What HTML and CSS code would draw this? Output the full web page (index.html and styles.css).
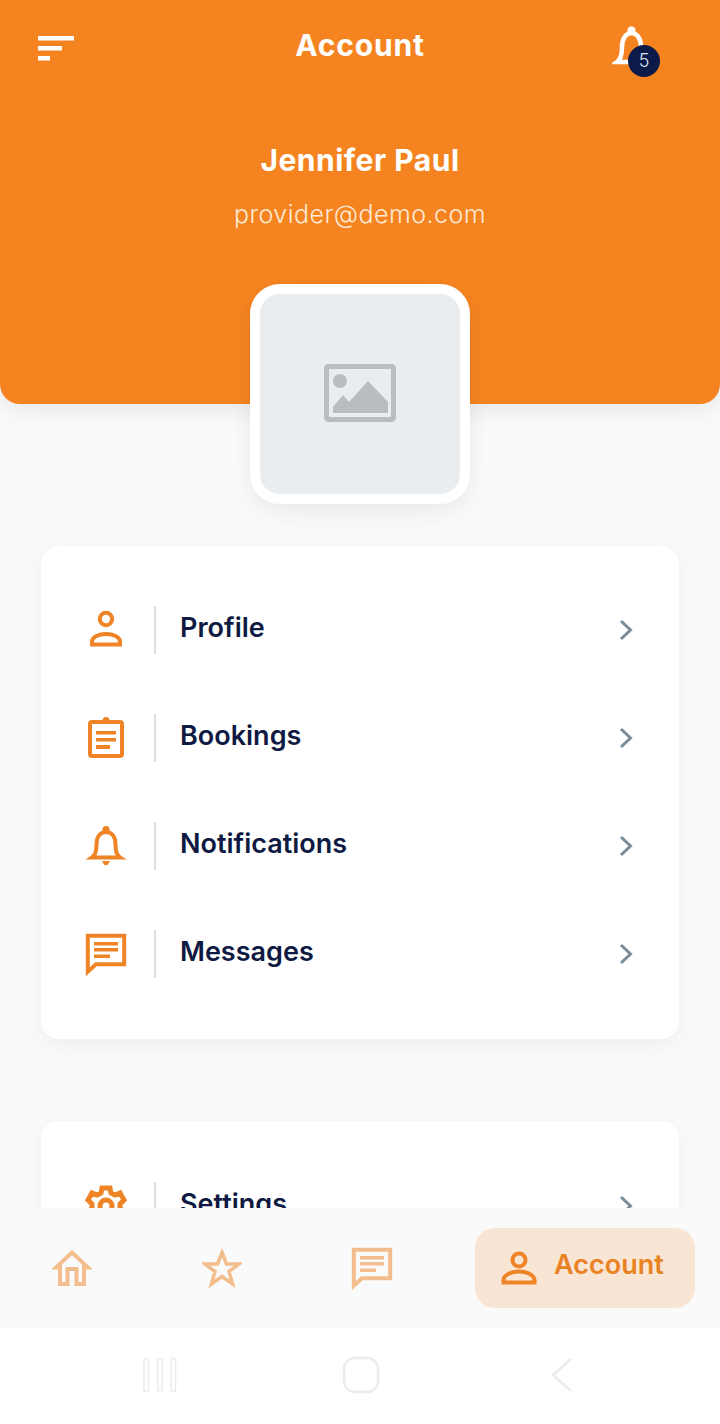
FILE: index.html
```html
<!DOCTYPE html>
<html lang="en">
<head>
<meta charset="utf-8">
<title>Account</title>
<link rel="stylesheet" href="styles.css">
</head>
<body>
<div class="screen">
  <main class="scroll">
    <header class="hero">
      <div class="topbar">
        <svg class="menu-icon" width="36" height="26" viewBox="0 0 36 26"><path class="white-fill" d="M0 0h36v4.500H0zM0 10h24v4.500H0zM0 20h12v4.500H0z"/></svg>
        <h1 class="title">Account</h1>
        <div class="bell-wrap">
          <svg width="40" height="44" viewBox="0 0 40 44"><path class="white-line" d="M5 38c3.500-2.500 5-6 5-15 0-9 4.500-14 9.500-14s9.500 5 9.500 14c0 9 1.500 12.500 5 15z"/><circle class="white-fill" cx="19.500" cy="6.500" r="4"/></svg>
          <span class="badge">5</span>
        </div>
      </div>
      <p class="name">Jennifer Paul</p>
      <p class="email">provider@demo.com</p>
    </header>

    <div class="avatar">
      <svg width="72" height="60" viewBox="0 0 72 60"><rect class="ph-line" x="2.500" y="2.500" width="67" height="53" rx="2"/><circle class="ph-fill" cx="16" cy="17" r="7"/><path class="ph-fill" d="M9 49v-6l10-12 6 7 19-21 20 21v11z"/></svg>
    </div>

    <section class="card card-first">
      <a class="row">
        <span class="row-icon"><svg width="44" height="44" viewBox="0 0 44 44"><circle class="o-line" cx="22" cy="11" r="6.200"/><path class="o-line" d="M8 36.500v-2.500c0-5.500 7-8 14-8s14 2.500 14 8v2.500z"/></svg></span>
        <span class="row-label">Profile</span>
        <svg class="chev" width="14" height="22" viewBox="0 0 14 22"><path d="M2 2l9.500 9L2 20"/></svg>
      </a>
      <a class="row">
        <span class="row-icon"><svg width="44" height="44" viewBox="0 0 44 44"><rect class="o-line" x="6" y="6" width="32" height="34" rx="2"/><circle class="o-fill" cx="22" cy="4.500" r="3.500"/><path class="o-fill" d="M12 15h20v3.500H12zM12 22h20v3.500H12zM12 29h14v4H12z"/></svg></span>
        <span class="row-label">Bookings</span>
        <svg class="chev" width="14" height="22" viewBox="0 0 14 22"><path d="M2 2l9.500 9L2 20"/></svg>
      </a>
      <a class="row">
        <span class="row-icon"><svg width="44" height="44" viewBox="0 0 44 44"><path class="o-line" d="M8 33.500c3-2 4.500-5 4.500-13 0-8 4-12.500 9.500-12.500s9.500 4.500 9.500 12.500c0 8 1.500 11 4.500 13z"/><circle class="o-fill" cx="22" cy="5.500" r="3.500"/><path class="o-fill" d="M18 37h8l-2 3.500c-1 1-3 1-4 0z"/></svg></span>
        <span class="row-label">Notifications</span>
        <svg class="chev" width="14" height="22" viewBox="0 0 14 22"><path d="M2 2l9.500 9L2 20"/></svg>
      </a>
      <a class="row">
        <span class="row-icon"><svg width="44" height="44" viewBox="0 0 44 44"><path class="o-line" d="M3.800 3.800h36.400v28.400H12l-8.200 7.500z"/><path class="o-fill" d="M10 10h24v3.500H10zM10 16h24v3.500H10zM10 22.500h16V26H10z"/></svg></span>
        <span class="row-label">Messages</span>
        <svg class="chev" width="14" height="22" viewBox="0 0 14 22"><path d="M2 2l9.500 9L2 20"/></svg>
      </a>
    </section>

    <section class="card card-second">
      <a class="row">
        <span class="row-icon"><svg width="44" height="44" viewBox="0 0 44 44"><path class="o-gear" d="M18 4h8l1 5 4 2 5-2 4 7-4 4v4l4 4-4 7-5-2-4 2-1 5h-8l-1-5-4-2-5 2-4-7 4-4v-4l-4-4 4-7 5 2 4-2z"/><circle class="o-gear" cx="22" cy="22" r="6"/></svg></span>
        <span class="row-label">Settings</span>
        <svg class="chev" width="14" height="22" viewBox="0 0 14 22"><path d="M2 2l9.500 9L2 20"/></svg>
      </a>
    </section>
  </main>

  <nav class="tabs">
    <a class="tab"><svg width="40" height="38" viewBox="0 0 40 38"><path class="f-line" d="M4 18.500L20 3.500l16 15h-4V35h-7.500V20h-9v15H8V18.500z"/></svg></a>
    <a class="tab"><svg width="40" height="40" viewBox="0 0 40 40"><path class="f-line f-thin" d="M20 4.500l4.500 11.500h12.500l-10 7.500 3.600 12.500L20 28.500l-10.600 7.500 3.600-12.500-10-7.500h12.500z"/></svg></a>
    <a class="tab"><svg width="44" height="44" viewBox="0 0 44 44"><path class="f-line" d="M3.800 3.800h36.400v28.400H12l-8.200 7.500z"/><path class="f-fill" d="M10 10h24v3.500H10zM10 16h24v3.500H10zM10 22.500h16V26H10z"/></svg></a>
    <a class="tab-active">
      <svg width="36" height="34" viewBox="0 0 36 34"><circle class="o-line" cx="18" cy="9" r="6.500"/><path class="o-line" d="M2.500 31.500v-2c0-6 8.500-9 15.500-9s15.500 3 15.500 9v2z"/></svg>
      <span class="tab-label">Account</span>
    </a>
  </nav>

  <footer class="sysbar">
    <svg width="34" height="36" viewBox="0 0 34 36"><rect class="sys" x="1" y="1.500" width="4.500" height="33" rx="1"/><rect class="sys" x="14.700" y="1.500" width="4.500" height="33" rx="1"/><rect class="sys" x="28" y="1.500" width="4.500" height="33" rx="1"/></svg>
    <svg width="38" height="38" viewBox="0 0 38 38"><rect class="sys sys-thick" x="2" y="2" width="34" height="34" rx="11"/></svg>
    <svg width="24" height="36" viewBox="0 0 24 36"><path class="sys sys-thick" d="M21 2L3 18l18 16"/></svg>
  </footer>
</div>
</body>
</html>
```
FILE: styles.css
```css
* { box-sizing: border-box; }
html, body { margin: 0; padding: 0; }
body { font-family: Inter, "Liberation Sans", sans-serif; background: #fff; }
.screen { width: 720px; height: 1424px; display: flex; flex-direction: column; overflow: hidden; }
.scroll { height: 1208px; flex: none; overflow: hidden; background: #fafafa; }

.hero { height: 404px; background: #f58420; border-radius: 0 0 20px 20px; box-shadow: 0 6px 24px rgba(0,0,0,.08); color: #fff; text-align: center; }
.topbar { height: 88px; display: flex; align-items: flex-start; justify-content: space-between; padding: 36px 60px 0 38px; position: relative; }
.menu-icon { display: block; }
.title { position: absolute; left: 0; right: 0; top: 28px; margin: 0; font-size: 30px; line-height: 34px; font-weight: 700; letter-spacing: .8px; }
.bell-wrap { position: relative; width: 48px; height: 50px; margin-top: -12px; }
.bell-wrap svg { display: block; }
.badge { position: absolute; left: 16px; top: 21px; width: 32px; height: 32px; border-radius: 50%; background: #0b1a48; color: #dfe6f2; font-size: 18px; font-weight: 300; line-height: 32px; text-align: center; }
.name { margin: 52px 0 0; font-size: 30px; line-height: 40px; font-weight: 700; letter-spacing: .5px; }
.email { margin: 19px 0 0; font-size: 25px; line-height: 30px; font-weight: 300; color: #fde9d6; letter-spacing: .45px; }

.avatar { position: relative; width: 220px; height: 220px; margin: -120px auto 0; background: #e9edf0; border: 10px solid #fff; border-radius: 30px; box-shadow: 0 8px 24px rgba(0,0,0,.07); display: flex; align-items: center; justify-content: center; }
.avatar svg { display: block; }
.ph-line { fill: none; stroke: #b9bdc0; stroke-width: 5; }
.ph-fill { fill: #b9bdc0; }

.card { width: 638px; margin-left: 41px; background: #fff; border-radius: 18px; box-shadow: 0 6px 22px rgba(0,0,0,.05); padding: 30px 0 31px; }
.card-first { margin-top: 42px; }
.card-second { margin-top: 82px; padding-top: 31px; }
.row { height: 108px; display: flex; align-items: center; padding-left: 43px; }
.row-icon { width: 72px; height: 48px; border-right: 2px solid #dcdcdc; display: flex; align-items: center; flex: none; }
.row-icon svg { display: block; }
.row-label { margin-left: 24px; flex: 1; font-size: 27px; line-height: 32px; font-weight: 600; color: #0e1a42; position: relative; top: -2px; }
.chev { margin-right: 46px; display: block; flex: none; }
.chev path { fill: none; stroke: #7c8d97; stroke-width: 3; }

.o-line { fill: none; stroke: #ee8426; stroke-width: 4; }
.o-gear { fill: none; stroke: #ee8426; stroke-width: 5; }
.o-fill { fill: #ee8426; }
.f-line { fill: none; stroke: #f3bd8e; stroke-width: 4; }
.f-thin { stroke-width: 3.500; }
.f-fill { fill: #f3bd8e; }
.white-line { fill: none; stroke: #fff; stroke-width: 4.500; }
.white-fill { fill: #fff; }

.tabs { height: 120px; flex: none; background: #fafafa; display: flex; align-items: center; padding: 0 25px 0 0; position: relative; }
.tab { width: 144px; display: flex; justify-content: center; margin-right: 6px; }
.tab svg { display: block; }
.tab-active { width: 220px; height: 80px; margin-left: auto; background: #f9e5d4; border-radius: 20px; display: flex; align-items: center; padding-left: 26px; gap: 17px; }
.tab-active svg { display: block; }
.tab-label { font-size: 27px; line-height: 32px; font-weight: 600; color: #e98222; position: relative; top: -3px; }

.sysbar { flex: 1; background: #fff; display: grid; grid-template-columns: repeat(3, 201px); justify-content: center; justify-items: center; align-items: center; padding: 0 0 2px 2px; }
.sysbar svg { display: block; }
.sys { fill: none; stroke: #ececec; stroke-width: 1.500; }
.sys-thick { stroke-width: 2.500; }
```
